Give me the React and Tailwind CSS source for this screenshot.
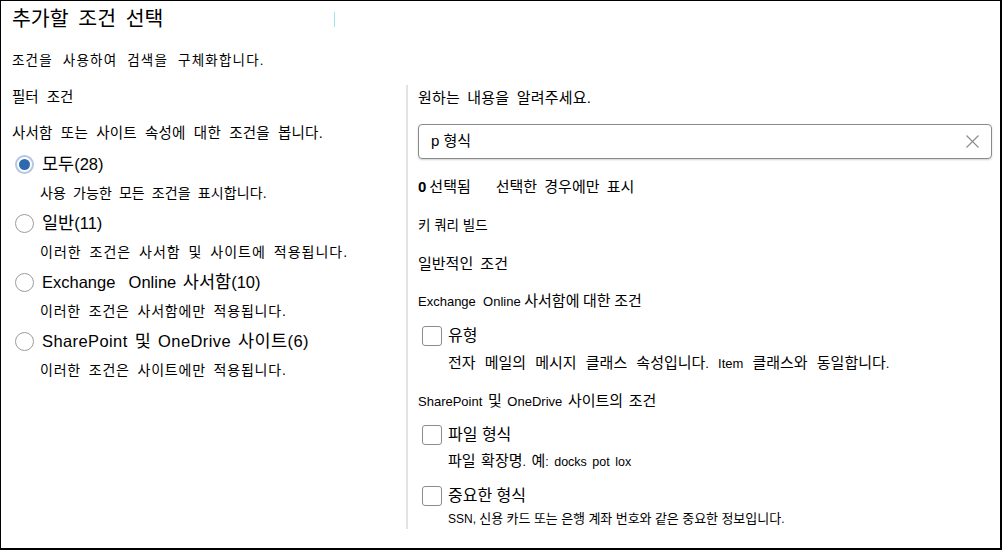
import React from "react";

const FONT = { fontFamily: '"Liberation Sans", "Noto Sans CJK KR", sans-serif' };
const HANGUL_SPLIT = /([\uAC00-\uD7A3\u3131-\u318E]+)/;
const HANGUL_TEST = /^[\uAC00-\uD7A3\u3131-\u318E]+$/;

function Mixed({ text, k }) {
  return text.split(HANGUL_SPLIT).map((part, i) =>
    HANGUL_TEST.test(part) ? (
      <span key={i} className={k}>
        {part}
      </span>
    ) : (
      <React.Fragment key={i}>{part}</React.Fragment>
    )
  );
}

function Radio({ checked }) {
  if (checked) {
    return (
      <span className="flex h-[19px] w-[19px] items-center justify-center rounded-full border-2 border-[#b3c7e3] bg-white">
        <span className="h-[11px] w-[11px] rounded-full bg-[#2d69b0]" />
      </span>
    );
  }
  return <span className="block h-[19px] w-[19px] rounded-full border-[1.5px] border-[#9c9c9c] bg-white" />;
}

function Checkbox() {
  return <span className="block h-[20px] w-[20px] shrink-0 rounded-[3px] border-[1.5px] border-[#8c8c8c] bg-white" />;
}

function RadioOption({ checked, label, labelClass = "", desc, descClass, first }) {
  return (
    <div className={first ? "mt-[9px]" : "mt-[8px]"}>
      <div className="flex h-[24px] items-center">
        <span className="ml-[14px] mr-[8px]">
          <Radio checked={checked} />
        </span>
        <span className={"whitespace-pre text-[16.5px] leading-[24px] text-black [word-spacing:2px] " + labelClass}>
          <Mixed text={label} k="text-[17.5px]" />
        </span>
      </div>
      <div className={"ml-[39px] mt-[7px] h-[20px] whitespace-nowrap text-[14px] leading-[20px] text-black [word-spacing:3px] " + descClass}>
        {desc}
      </div>
    </div>
  );
}

function CheckOption({ label, className, children, descClass }) {
  return (
    <div className={className}>
      <div className="flex h-[22px] items-center">
        <span className="ml-[4px]">
          <Checkbox />
        </span>
        <span className="ml-[6px] text-[16px] leading-[22px] text-black">{label}</span>
      </div>
      <div className={"ml-[30px] h-[20px] whitespace-nowrap leading-[20px] text-black " + descClass}>{children}</div>
    </div>
  );
}

export default function App() {
  return (
    <div
      className="h-[550px] w-[1002px] overflow-hidden border-t border-l border-r-2 border-b-2 border-black bg-white text-black"
      style={FONT}
    >
      <div className="flex items-center pl-[11px] pt-[3px]">
        <div className="w-[322px] whitespace-nowrap text-[20.5px] leading-[30px] [word-spacing:4px]">추가할 조건 선택</div>
        <span className="block h-[15px] w-[1px] bg-[#9fe3f0]" />
      </div>
      <div className="mt-[17px] whitespace-nowrap pl-[11px] text-[13.5px] leading-[20px] tracking-[1.2px] [word-spacing:5px]">
        조건을 사용하여 검색을 구체화합니다.
      </div>
      <div className="mt-[14px] flex items-start">
        <div className="w-[405px] shrink-0 pt-[2px]">
          <div className="pl-[11px] text-[14.5px] leading-[20px] [word-spacing:4px]">필터 조건</div>
          <div className="mt-[16px] whitespace-nowrap pl-[11px] text-[14.5px] leading-[20px] tracking-[0.2px] [word-spacing:4px]">
            사서함 또는 사이트 속성에 대한 조건을 봅니다.
          </div>
          <RadioOption
            first
            checked
            label="모두(28)"
            desc="사용 가능한 모든 조건을 표시합니다."
            descClass="tracking-[0.1px]"
          />
          <RadioOption
            label="일반(11)"
            desc="이러한 조건은 사서함 및 사이트에 적용됩니다."
            descClass="tracking-[1px]"
          />
          <RadioOption
            label={"Exchange\u00a0 Online 사서함(10)"}
            desc="이러한 조건은 사서함에만 적용됩니다."
            descClass="tracking-[0.8px]"
          />
          <RadioOption
            label="SharePoint 및 OneDrive 사이트(6)"
            labelClass="tracking-[0.4px]"
            desc="이러한 조건은 사이트에만 적용됩니다."
            descClass="tracking-[0.8px]"
          />
        </div>
        <div className="border-l-2 border-[#e3e3e3] pl-[10px] pt-[3px]">
          <div className="whitespace-nowrap text-[15px] leading-[20px] tracking-[0.2px] [word-spacing:3px]">
            원하는 내용을 알려주세요.
          </div>
          <div className="mt-[16px] flex h-[35px] w-[574px] items-center rounded-[4px] border border-[#8a8a8a] pl-[12px] pr-[11px] shadow-[0_1px_2px_rgba(0,0,0,0.18)]">
            <span className="flex-1 text-[15px]">p 형식</span>
            <svg width="15" height="15" viewBox="0 0 15 15" className="text-[#8e8e8e]">
              <path d="M1.5 1.5 L13.5 13.5 M13.5 1.5 L1.5 13.5" stroke="currentColor" strokeWidth="1.2" fill="none" />
            </svg>
          </div>
          <div className="mt-[18px] flex h-[20px] items-center whitespace-nowrap text-[15px] leading-[20px]">
            <span className="font-bold">0</span>
            <span className="ml-[3px]">선택됨</span>
            <span className="ml-[25px] [word-spacing:3px]">선택한 경우에만 표시</span>
          </div>
          <div className="mt-[19px] text-[13.5px] leading-[20px]">키 쿼리 빌드</div>
          <div className="mt-[18px] text-[15px] leading-[20px] [word-spacing:3px]">일반적인 조건</div>
          <div className="mt-[17px] whitespace-pre text-[13px] leading-[20px]">
            <Mixed text={"Exchange\u00a0 Online 사서함에 대한 조건"} k="text-[15px]" />
          </div>
          <CheckOption className="mt-[13px]" label="유형" descClass="mt-[6px] text-[13px] [word-spacing:5.5px]">
            <Mixed text="전자 메일의 메시지 클래스 속성입니다. Item 클래스와 동일합니다." k="text-[15px]" />
          </CheckOption>
          <div className="mt-[18px] whitespace-pre text-[13px] leading-[20px] [word-spacing:2px]">
            <Mixed text="SharePoint 및 OneDrive 사이트의 조건" k="text-[15px]" />
          </div>
          <CheckOption className="mt-[12px]" label="파일 형식" descClass="mt-[5px] text-[12.5px] [word-spacing:2px]">
            <Mixed text="파일 확장명. 예: docks pot lox" k="text-[15px]" />
          </CheckOption>
          <CheckOption className="mt-[14px]" label="중요한 형식" descClass="mt-[2px] text-[12px]">
            <Mixed text="SSN, 신용 카드 또는 은행 계좌 번호와 같은 중요한 정보입니다." k="text-[13px]" />
          </CheckOption>
        </div>
      </div>
    </div>
  );
}
